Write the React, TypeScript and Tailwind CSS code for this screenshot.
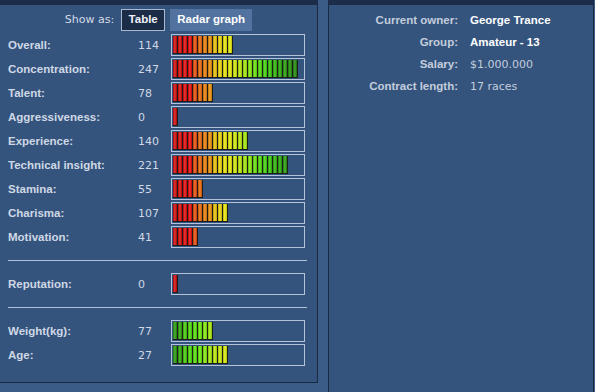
const BOLD = "font-['Liberation_Sans',Arial,sans-serif] font-bold text-[11.5px]";
const NORMAL = "font-['DejaVu_Sans',Verdana,sans-serif] text-[11px]";

// red -> green scale used by the skill bars
const SKILL_COLORS = [
  'bg-[#d40000]',
  'bg-[#e00000]',
  'bg-[#e80000]',
  'bg-[#f00000]',
  'bg-[#f04800]',
  'bg-[#f06400]',
  'bg-[#f07c00]',
  'bg-[#f09000]',
  'bg-[#f0c400]',
  'bg-[#f0dc00]',
  'bg-[#f0ec00]',
  'bg-[#e8f000]',
  'bg-[#d4f000]',
  'bg-[#bcf000]',
  'bg-[#a4f000]',
  'bg-[#84f000]',
  'bg-[#64e800]',
  'bg-[#4ce000]',
  'bg-[#3cd800]',
  'bg-[#30c800]',
  'bg-[#28b800]',
  'bg-[#20a800]',
  'bg-[#209c00]',
  'bg-[#189000]',
  'bg-[#188800]',
];

// green -> yellow scale used by weight / age
const BODY_COLORS = [
  'bg-[#209800]',
  'bg-[#28a800]',
  'bg-[#40d000]',
  'bg-[#48e000]',
  'bg-[#50e800]',
  'bg-[#64f000]',
  'bg-[#84f000]',
  'bg-[#a4f000]',
  'bg-[#bcf000]',
  'bg-[#ccf000]',
  'bg-[#dcf000]',
];

type Stat = { label: string; value: number; segs: number };

const skills: Stat[] = [
  { label: 'Overall:', value: 114, segs: 12 },
  { label: 'Concentration:', value: 247, segs: 25 },
  { label: 'Talent:', value: 78, segs: 8 },
  { label: 'Aggressiveness:', value: 0, segs: 1 },
  { label: 'Experience:', value: 140, segs: 15 },
  { label: 'Technical insight:', value: 221, segs: 23 },
  { label: 'Stamina:', value: 55, segs: 6 },
  { label: 'Charisma:', value: 107, segs: 11 },
  { label: 'Motivation:', value: 41, segs: 5 },
];

const body: Stat[] = [
  { label: 'Weight(kg):', value: 77, segs: 8 },
  { label: 'Age:', value: 27, segs: 11 },
];

const contract = [
  { label: 'Current owner:', value: 'George Trance', strong: true },
  { label: 'Group:', value: 'Amateur - 13', strong: true },
  { label: 'Salary:', value: '$1.000.000', strong: false },
  { label: 'Contract length:', value: '17 races', strong: false },
];

const Bar = ({ segs, colors }: { segs: number; colors: string[] }) => (
  <div className="h-[22px] w-[134px] border border-[#b4c3d8] pl-px pt-px">
    <div className="flex">
      {colors.slice(0, segs).map((c, i) => (
        <div
          key={i}
          className={`h-[18px] w-[5px] border-r border-b border-[#1c1c1c] bg-[linear-gradient(90deg,rgba(0,0,0,0.25),rgba(255,255,255,0.22)_45%,rgba(0,0,0,0.2))] ${c}`}
        />
      ))}
    </div>
  </div>
);

const StatRow = ({ stat, colors }: { stat: Stat; colors: string[] }) => (
  <div className="flex h-[24px] items-center">
    <span className={`mt-[2px] w-[130px] text-[#cfd8e4] ${BOLD}`}>{stat.label}</span>
    <span className={`mt-[2px] w-[33px] text-[#cfd8e4] ${NORMAL}`}>{stat.value}</span>
    <Bar segs={stat.segs} colors={colors} />
  </div>
);

export default function App() {
  return (
    <div className="flex h-[392px] w-[595px] gap-[10px] overflow-hidden bg-[#3c5c88]">
      {/* Stats panel */}
      <div className="h-[383px] w-[318px] shrink-0 border-t-[5px] border-r border-b border-[#1a2a45] border-t-[#1c2d4a] bg-[#34547e] pt-[4px]">
        <div className="flex items-center justify-center">
          <span className={`mr-[7px] text-[#d4dce7] ${NORMAL}`}>Show as:</span>
          <div
            className={`flex h-[22px] w-[44px] items-center justify-center border border-[#a8b8ce] bg-[#1c2b46] text-[#eef2f8] ${BOLD}`}
          >
            Table
          </div>
          <div
            className={`ml-[5px] flex h-[22px] w-[82px] items-center justify-center bg-[#5273a0] text-white ${BOLD}`}
          >
            Radar graph
          </div>
        </div>

        <div className="mt-[2px] pl-[8px]">
          {skills.map((s) => (
            <StatRow key={s.label} stat={s} colors={SKILL_COLORS} />
          ))}

          <div className="mt-[11px] h-px w-[299px] bg-[#b0bfd3]" />
          <div className="mt-[11px]">
            <StatRow stat={{ label: 'Reputation:', value: 0, segs: 1 }} colors={SKILL_COLORS} />
          </div>
          <div className="mt-[11px] h-px w-[299px] bg-[#b0bfd3]" />

          <div className="mt-[11px]">
            {body.map((s) => (
              <StatRow key={s.label} stat={s} colors={BODY_COLORS} />
            ))}
          </div>
        </div>
      </div>

      {/* Contract panel */}
      <div className="h-[392px] w-[266px] shrink-0 border-t-[5px] border-r border-l border-[#1a2a45] border-t-[#1c2d4a] bg-[#34547e] pt-[5px]">
        {contract.map((row) => (
          <div key={row.label} className="flex h-[22px] items-center">
            <span className={`w-[129px] text-right text-[#c3cddb] ${BOLD}`}>{row.label}</span>
            <span
              className={`ml-[12px] ${row.strong ? `text-white ${BOLD}` : `text-[#c3cddb] ${NORMAL}`}`}
            >
              {row.value}
            </span>
          </div>
        ))}
      </div>
    </div>
  );
}
